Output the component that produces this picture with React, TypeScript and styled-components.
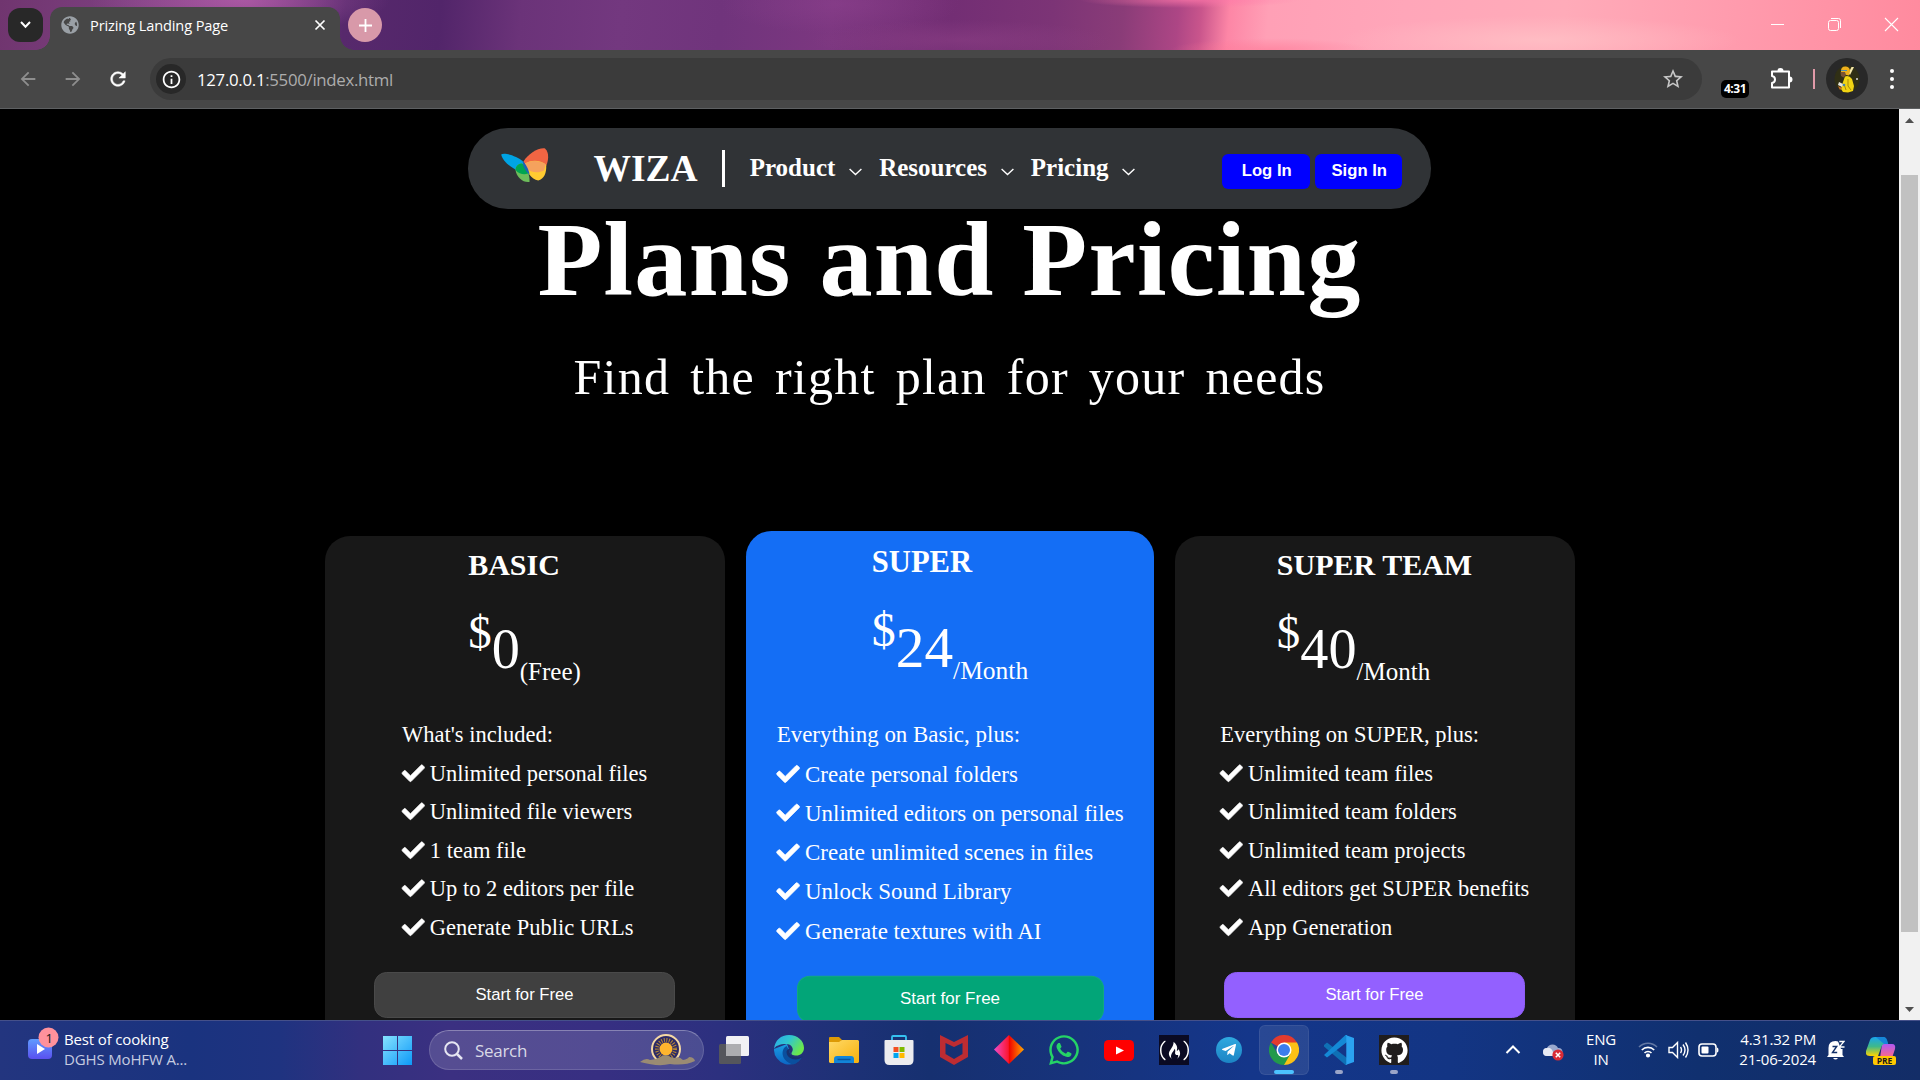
import React from "react";
import styled, { createGlobalStyle } from "styled-components";
import { FaCheck, FaWhatsapp, FaGlobeAmericas, FaTelegramPlane, FaGithub } from "react-icons/fa";
import { MdArrowBack, MdArrowForward, MdRefresh, MdInfoOutline, MdStarBorder } from "react-icons/md";
import { SiFreecodecamp } from "react-icons/si";

const Global = createGlobalStyle`
  *, *::before, *::after { box-sizing: border-box; }
  html, body { margin: 0; background: #000; overflow: hidden; }
  svg { display: block; flex: none; }
`;

const ui = `"Open Sans", "Noto Sans", sans-serif`;
const serif = `"Liberation Serif", "Times New Roman", serif`;
const sans = `"Liberation Sans", Arial, sans-serif`;

const Screen = styled.div`
  width: 1920px;
  height: 1080px;
  display: flex;
  flex-direction: column;
  overflow: hidden;
  background: #000;
  color: #fff;
`;

/* ---------- browser frame ---------- */
const TitleBar = styled.header`
  height: 50px;
  display: flex;
  align-items: flex-start;
  padding-left: 8px;
  background:
    radial-gradient(ellipse 150px 34px at 240px 0, rgba(190, 100, 180, 0.6), transparent),
    radial-gradient(ellipse 120px 30px at 840px 4px, rgba(150, 70, 150, 0.35), transparent),
    radial-gradient(ellipse 150px 20px at 960px 40px, rgba(150, 70, 140, 0.4), transparent),
    radial-gradient(ellipse 110px 8px at 1190px 0, rgba(255, 120, 170, 0.7), transparent),
    radial-gradient(ellipse 200px 24px at 1540px 40px, rgba(255, 200, 202, 0.6), transparent),
    radial-gradient(ellipse 100px 12px at 1270px 50px, rgba(255, 120, 150, 0.6), transparent),
    linear-gradient(95deg, #70356f 0, #7d4080 130px, #8a4589 250px, #57296c 345px, #52256a 440px, #6b3379 520px,
      #73387f 620px, #70347c 720px, #7c3780 830px, #732e74 950px, #7c3476 1050px, #8a3c78 1120px, #ad4685 1175px,
      #c9558c 1198px, #fd86a6 1226px, #ffa0b6 1265px, #ffa6b9 1400px, #ffabb9 1560px, #ff9cae 1720px, #ff8a9e 1920px);
`;
const TabSearch = styled.div`
  width: 35px;
  height: 34px;
  margin-top: 8px;
  border-radius: 12px;
  background: #282828;
  display: grid;
  place-items: center;
`;
const Tab = styled.div`
  position: relative;
  width: 290px;
  height: 43px;
  margin: 7px 0 0 7px;
  padding: 0 13px 7px 11px;
  border-radius: 12px 12px 0 0;
  background: #474747;
  display: flex;
  align-items: center;
  font: 14.6px ${ui};
  letter-spacing: -0.12px;
  &::before, &::after {
    content: "";
    position: absolute;
    bottom: 0;
    width: 14px;
    height: 14px;
  }
  &::before { left: -14px; background: radial-gradient(circle at 0 0, transparent 13.5px, #474747 14px); }
  &::after { right: -14px; background: radial-gradient(circle at 100% 0, transparent 13.5px, #474747 14px); }
`;
const TabTitle = styled.span`
  flex: 1;
  margin-left: 11px;
  white-space: nowrap;
`;
const NewTab = styled.div`
  width: 34px;
  height: 34px;
  margin: 8px 0 0 8px;
  border-radius: 50%;
  background: #d899a9;
  display: grid;
  place-items: center;
`;
const WindowControls = styled.div`
  margin: 17px 21px 0 auto;
  display: flex;
  gap: 42px;
`;

const Toolbar = styled.div`
  height: 59px;
  display: flex;
  align-items: center;
  background: #474747;
  border-bottom: 1px solid #5e6062;
  padding-left: 17px;
`;
const NavIcon = styled.span<{ $dim?: boolean; $gap?: number }>`
  color: ${(p) => (p.$dim ? "#8e8e8e" : "#fff")};
  margin: -1px ${(p) => p.$gap ?? 23}px 0 0;
  font-size: 22px;
  path:not([fill="none"]) { stroke: currentColor; stroke-width: ${(p) => (p.$dim ? 0 : 0.5)}; }
`;
const AddressBar = styled.div`
  width: 1552px;
  height: 42px;
  border-radius: 21px;
  background: #3b3b3b;
  display: flex;
  align-items: center;
  padding: 0 17px 0 6px;
  font: 16.8px ${ui};
  letter-spacing: -0.29px;
  color: #adadad;
  b { font-weight: 400; color: #fff; }
`;
const SiteInfo = styled.span`
  width: 30px;
  height: 30px;
  margin-right: 11px;
  border-radius: 50%;
  background: #282828;
  display: grid;
  place-items: center;
  color: #fff;
`;
const Star = styled.span`
  margin-left: auto;
  color: #c7c7c7;
`;
const TimerBadge = styled.span`
  width: 28px;
  height: 18px;
  margin: 19px 0 0 19px;
  border-radius: 5px;
  background: #000;
  font: 700 12px/18px ${ui};
  letter-spacing: -0.5px;
  text-align: center;
`;
const Extension = styled.span`
  margin: -2px 0 0 21px;
`;
const Separator = styled.span`
  width: 2px;
  height: 20px;
  margin-left: 20px;
  background: #e19aa9;
`;
const Avatar = styled.span`
  width: 42px;
  height: 42px;
  margin-left: 11px;
  border-radius: 50%;
  background: #282828;
  display: grid;
  place-items: center;
`;
const Kebab = styled.span`
  margin-left: 22px;
  display: grid;
  gap: 4px;
  i { width: 4px; height: 4px; border-radius: 50%; background: #fff; }
`;

/* ---------- web page ---------- */
const Viewport = styled.div`
  height: 911px;
  display: flex;
`;
const Page = styled.main`
  width: 1899px;
  height: 911px;
  overflow: hidden;
  padding-top: 19px;
  display: flex;
  flex-direction: column;
  align-items: center;
  font-family: ${serif};
`;
const NavBar = styled.nav`
  flex: none;
  width: 963px;
  height: 81px;
  border-radius: 40px;
  background: #303336;
  display: flex;
  align-items: center;
  padding: 0 29px 0 33px;
`;
const LogoBox = styled.span`
  margin: -7px 44.5px 0 0;
`;
const Brand = styled.span`
  font-size: 37.5px;
  line-height: 42px;
  font-weight: 700;
`;
const Divider = styled.span`
  width: 3px;
  height: 37px;
  margin: 0 25px 0 24px;
  background: #fff;
`;
const MenuItem = styled.span`
  display: flex;
  align-items: center;
  gap: 13.5px;
  margin-right: 17.3px;
  font-size: 25px;
  line-height: 28px;
  font-weight: 700;
  span { margin-top: -1px; }
  svg { margin-top: 7px; }
`;
const AuthButtons = styled.div`
  margin: 6px 0 0 auto;
  display: flex;
  gap: 5px;
`;
const AuthButton = styled.button<{ $width: number }>`
  width: ${(p) => p.$width}px;
  height: 35px;
  padding: 0 0 2px 1.5px;
  border: 0;
  border-radius: 6.25px;
  background: #0000ff;
  color: #fff;
  font: 700 16.67px ${sans};
`;
const Heading = styled.h1`
  margin: 0;
  font-size: 106.25px;
  line-height: 100px;
  letter-spacing: 1.25px;
`;
const SubHeading = styled.p`
  margin: 39px 0 0;
  font-size: 50px;
  line-height: 58px;
  letter-spacing: 1.25px;
  word-spacing: 6.25px;
`;
const Cards = styled.section`
  display: flex;
  gap: 25px;
  margin-top: 130px;
`;
const Card = styled.article<{ $featured?: boolean }>`
  width: 400px;
  height: 508px;
  padding-top: ${(p) => (p.$featured ? 13 : 12)}px;
  border-radius: 25px;
  background: ${(p) => (p.$featured ? "#146ef5" : "#181818")};
  transform: ${(p) => (p.$featured ? "scale(1.02)" : "none")};
  display: flex;
  flex-direction: column;
  align-items: center;
`;
const CardHead = styled.div`
  display: flex;
  flex-direction: column;
`;
const PlanName = styled.h2`
  margin: 0;
  font-size: 30px;
  line-height: 34px;
`;
const Price = styled.div`
  margin-top: 35px;
  font-size: 56.25px;
  line-height: 64px;
  height: 64px;
  white-space: nowrap;
  sup { font-size: 46.9px; line-height: 0; }
  sub { font-size: 25px; line-height: 0; }
`;
const Features = styled.ul<{ $featured?: boolean }>`
  list-style: none;
  margin: 35px 0 ${(p) => (p.$featured ? 23.4 : 24.4)}px;
  padding: 0 0 0 0.4px;
  font-size: 22.5px;
`;
const Feature = styled.li`
  height: 38.6px;
  line-height: 38.6px;
  display: flex;
  align-items: center;
  gap: 5.3px;
  white-space: nowrap;
  svg { margin-top: -2px; stroke: #fff; stroke-width: 16; overflow: visible; }
`;
const StartButton = styled.button<{ $bg: string; $edge: string }>`
  width: 301px;
  height: 46px;
  border: 1px solid ${(p) => p.$edge};
  border-radius: 12.5px;
  background: ${(p) => p.$bg};
  color: #fff;
  font: 16.67px ${sans};
  padding: 0;
`;
const ScrollTrack = styled.div`
  width: 21px;
  background: #f1f1f1;
  display: flex;
  flex-direction: column;
  align-items: center;
  padding: 9px 0 8px;
`;
const ScrollThumb = styled.div`
  width: 17px;
  height: 757px;
  margin: 52px 0 auto;
  background: #c1c1c1;
`;

/* ---------- taskbar ---------- */
const Taskbar = styled.footer`
  height: 60px;
  border-top: 1px solid #45508a;
  display: flex;
  align-items: center;
  padding: 0 0 1px 27px;
  background: linear-gradient(90deg, #23357f 0, #1a337f 190px, #1f3380 280px, #32307f 360px, #3b3081 450px, #372f82 600px,
    #2c307f 720px, #1d3176 850px, #163070 930px, #17337c 1080px, #14368a 1250px, #133584 1450px, #10306f 1700px, #132d67 1920px);
  font-family: ${ui};
`;
const WidgetIcon = styled.span`
  margin-top: -12px;
`;
const TwoLines = styled.div<{ $align?: string; $width?: number; $left?: number }>`
  width: ${(p) => (p.$width ? p.$width + "px" : "auto")};
  margin: -2px 0 0 ${(p) => p.$left ?? 0}px;
  text-align: ${(p) => p.$align ?? "left"};
  font-size: 15px;
  line-height: 20px;
  letter-spacing: -0.15px;
  white-space: nowrap;
  small { display: block; font-size: inherit; color: #c5cbe0; }
`;
const StartIcon = styled.span`
  margin-left: 191px;
`;
const SearchBox = styled.div`
  width: 275px;
  height: 40px;
  margin-left: 17px;
  padding: 0 8px 0 14px;
  border-radius: 20px;
  border: 1px solid rgba(255, 255, 255, 0.14);
  border-top-color: rgba(255, 255, 255, 0.3);
  background: rgba(255, 255, 255, 0.14);
  display: flex;
  align-items: center;
  font-size: 17px;
  letter-spacing: -0.3px;
  color: #d9d9e6;
  span { flex: 1; margin: 0 0 0 12px; }
`;
const AppTile = styled.span<{ $active?: boolean }>`
  position: relative;
  width: 50px;
  height: 50px;
  margin-left: 5px;
  border-radius: 6px;
  background: ${(p) => (p.$active ? "rgba(255,255,255,.09)" : "transparent")};
  box-shadow: ${(p) => (p.$active ? "inset 0 0 0 1px rgba(255,255,255,.07)" : "none")};
  display: grid;
  place-items: center;
`;
const Running = styled.i<{ $active?: boolean }>`
  position: absolute;
  bottom: 1px;
  left: 50%;
  transform: translateX(-50%);
  width: ${(p) => (p.$active ? 20 : 8)}px;
  height: 4px;
  border-radius: 2px;
  background: ${(p) => (p.$active ? "#4cc2ff" : "#9aa5c8")};
`;
const Apps = styled.div`
  display: flex;
`;
const TileBox = styled.span<{ $bg: string; $size: number; $round?: boolean }>`
  width: ${(p) => p.$size}px;
  height: ${(p) => p.$size}px;
  border-radius: ${(p) => (p.$round ? "50%" : "0")};
  background: ${(p) => p.$bg};
  display: grid;
  place-items: center;
  color: #fff;
`;
const Tray = styled.div`
  margin-left: auto;
  padding-right: 23px;
  display: flex;
  align-items: center;
`;
const TrayItem = styled.span<{ $left: number; $top?: number }>`
  margin: ${(p) => p.$top ?? 0}px 0 0 ${(p) => p.$left}px;
`;

const Chevron = () => (
  <svg width="13" height="8" viewBox="0 0 13 8" fill="none" stroke="#fff" strokeWidth="1.400"><path d="M.6 1 6.500 6.600 12.400 1" /></svg>
);

const Butterfly = () => (
  <svg width="48" height="35" viewBox="0 0 48 35">
    <path d="M.2 6.500C3 4 16 8 22 13.500c3 3.500 5.500 8.500 6.500 13C18 25 2 16 .2 6.500Z" fill="#00a4e4" />
    <path d="M14.500 22c0-4 3-6.500 6.500-6.500 4 3 8 10 7.500 18.500C22 35 15.500 29 14.500 22Z" fill="#6dbd5b" />
    <path d="M14.500 22c0-4 3-6.500 6.500-6.500 3 2 5 6 6 10-3 1.500-9 1-12.500-3.500Z" fill="#00a651" />
    <path d="M22.500 13.500C27 6 37-.5 44 .4c5 5 3.500 14-.5 20.600-9 3-18 .5-21-7.500Z" fill="#f16543" />
    <path d="M24 15.500c5-3.500 15-4.500 21.200 1.500.5 8-2 14-8 15.600-7-1.600-11.700-8.600-13.200-17.100Z" fill="#ffcb31" />
    <path d="M24 15.500c5-3.500 14-3.500 20.700.500-.5 2.500-1 4-1.700 6.500-6 3-13.500 2-17.500-2Z" fill="#f5a25d" />
    <path d="M22 13c2.500 3 6 8.500 6.500 13.500-3.500-2.500-7.500-9-6.500-13.500Z" fill="#1c63b7" />
  </svg>
);

const EdgeIcon = () => (
  <svg width="30" height="30" viewBox="0 0 30 30">
    <defs>
      <linearGradient id="eg1" x1="0" y1="0" x2="1" y2=".5"><stop offset="0" stopColor="#2aa7ea" /><stop offset=".5" stopColor="#30c6d0" /><stop offset="1" stopColor="#6be84c" /></linearGradient>
      <linearGradient id="eg2" x1="0" y1="0" x2="0" y2="1"><stop offset="0" stopColor="#1a9ee4" /><stop offset="1" stopColor="#0c66c4" /></linearGradient>
    </defs>
    <path d="M0 14a15 15 0 0 0 28 8c-4 3-12 3-12-5l-3-8Z" fill="url(#eg2)" />
    <path d="M12.500 11c-6 3-6 15 6.500 18.500 4-1 7-4 9-7.500-6 3-14 2-12.500-6Z" fill="#0a4f9e" />
    <path d="M16 14c-1.500 5 2 8.500 7 8.500 2.500 0 4-.5 5.500-2l-.5 2c-6 4-15 1.500-15.500-5.500 0-2 1.500-3.500 3.500-3Z" fill="#17316f" />
    <path d="M0 14C1 5 7 0 15 0c9 0 15 6 15 13 0 5-4 7.500-7.500 7.500-4 0-6-1-4.500-3.500 2-3 0-8-6-8C6 9 1 11 0 14Z" fill="url(#eg1)" />
  </svg>
);

const apps: { name: string; icon: React.ReactNode; active?: boolean; running?: boolean }[] = [
  {
    name: "taskview",
    icon: (
      <svg width="30" height="28" viewBox="0 0 30 28"><rect x="7" y="0" width="23" height="20" rx="1.500" fill="#f1f1f4" /><rect x="0" y="8" width="22" height="20" rx="1.500" fill="#55565c" /><rect x="7" y="8" width="15" height="12" fill="#adadb0" /></svg>
    ),
  },
  { name: "edge", icon: <EdgeIcon /> },
  {
    name: "explorer",
    icon: (
      <svg width="30" height="28" viewBox="0 0 30 28">
        <defs><linearGradient id="fo" x1="0" y1="0" x2="1" y2="1"><stop offset="0" stopColor="#ffd967" /><stop offset="1" stopColor="#f7b10c" /></linearGradient></defs>
        <path d="M0 2Q0 1 1 1h9l3 3-2 5H0Z" fill="#dd9a05" /><path d="M0 6h10l3-2h16l1 1v21l-1 1H1l-1-1Z" fill="url(#fo)" />
        <path d="M5 27v-4q0-3 3-3h14q3 0 3 3v4Z" fill="#1285d8" /><path d="M8.500 23.500h13" stroke="#0a559e" strokeWidth="1.500" />
      </svg>
    ),
  },
  {
    name: "store",
    icon: (
      <svg width="30" height="30" viewBox="0 0 30 30">
        <path d="M8 6V2q0-1 1-1h12q1 0 1 1v4" fill="none" stroke="#35c1f1" strokeWidth="1.800" /><path d="M.5 6q0-1 1-1h27q1 0 1 1v19q0 5-5 5h-19q-5 0-5-5Z" fill="#ececef" />
        <rect x="9.500" y="12" width="5" height="5" fill="#f25022" /><rect x="15.500" y="12" width="5" height="5" fill="#7fba00" /><rect x="9.500" y="18" width="5" height="5" fill="#00a4ef" /><rect x="15.500" y="18" width="5" height="5" fill="#ffb900" />
      </svg>
    ),
  },
  { name: "mcafee", icon: <svg width="28" height="30" viewBox="0 0 28 30"><path fillRule="evenodd" d="M0 0 14 7 28 0v22l-14 8L0 22Zm5.500 8v11l8.500 5 8.500-5V8L14 12Z" fill="#bd2c32" /></svg> },
  {
    name: "diamond",
    icon: (
      <svg width="30" height="30" viewBox="0 0 30 30">
        <defs><linearGradient id="di"><stop offset="0" stopColor="#ef4bcb" /><stop offset=".48" stopColor="#fb1730" /><stop offset=".5" stopColor="#f00000" /><stop offset="1" stopColor="#ffa500" /></linearGradient></defs>
        <path d="M15 0 30 14.500 15 29 0 14.500Z" fill="url(#di)" />
      </svg>
    ),
  },
  { name: "whatsapp", icon: <FaWhatsapp size={34} color="#25d366" /> },
  { name: "youtube", icon: <svg width="30" height="21" viewBox="0 0 30 21"><rect width="30" height="21" rx="4.500" fill="#ff0000" /><path d="m12 6.500 8 4-8 4Z" fill="#fff" /></svg> },
  { name: "fcc", icon: <TileBox $bg="#0a0a23" $size={30}><SiFreecodecamp size={29} /></TileBox> },
  { name: "telegram", icon: <TileBox $bg="linear-gradient(#2fa9e0,#1c84c4)" $size={26} $round><FaTelegramPlane size={16} /></TileBox> },
  {
    name: "chrome",
    active: true,
    running: true,
    icon: (
      <svg width="30" height="30" viewBox="0 0 30 30">
        <path d="M15 15 2 7.500A15 15 0 0 1 28 7.500Z" fill="#e33b2e" /><path d="M15 15V7.500h13A15 15 0 0 1 15 30Z" fill="#fbc116" /><path d="M15 15 21.500 18.700 15 30A15 15 0 0 1 2 7.500L8.500 18.700Z" fill="#229a4b" />
        <circle cx="15" cy="15" r="7.500" fill="#fff" /><circle cx="15" cy="15" r="6" fill="#3b7ded" />
      </svg>
    ),
  },
  {
    name: "vscode",
    running: true,
    icon: (
      <svg width="30" height="30" viewBox="0 0 30 30"><path d="m0 10 3-2.500L23 23v7h-1.500L0 11.500Z" fill="#0f70b5" /><path d="M0 20 21.500 0H23v7L3 22.500Z" fill="#1489d6" /><path d="M21.500 0 30 3v24l-8.500 3 .8-1V1Z" fill="#2ba3f1" /></svg>
    ),
  },
  { name: "github", running: true, icon: <TileBox $bg="#201d1d" $size={30}><FaGithub size={27} /></TileBox> },
];

const plans = [
  {
    name: "BASIC", price: "0", unit: "(Free)", intro: "What's included:", bg: "#404040", edge: "#4a4a4a",
    items: ["Unlimited personal files", "Unlimited file viewers", "1 team file", "Up to 2 editors per file", "Generate Public URLs"],
  },
  {
    name: "SUPER", price: "24", unit: "/Month", intro: "Everything on Basic, plus:", bg: "#02a578", edge: "#12a97f", featured: true,
    items: ["Create personal folders", "Unlimited editors on personal files", "Create unlimited scenes in files", "Unlock Sound Library", "Generate textures with AI"],
  },
  {
    name: "SUPER TEAM", price: "40", unit: "/Month", intro: "Everything on SUPER, plus:", bg: "#9360ff", edge: "#8e5cf6",
    items: ["Unlimited team files", "Unlimited team folders", "Unlimited team projects", "All editors get SUPER benefits", "App Generation"],
  },
];

const BrowserFrame = () => (
  <>
    <TitleBar>
      <TabSearch><svg width="11" height="8" viewBox="0 0 11 8" fill="none" stroke="#fff" strokeWidth="2"><path d="m1 1 4.500 4.700L10 1" /></svg></TabSearch>
      <Tab>
        <FaGlobeAmericas size={18} color="#9aa0a6" />
        <TabTitle>Prizing Landing Page</TabTitle>
        <svg width="14" height="14" viewBox="0 0 14 14" stroke="#fff" strokeWidth="1.700"><path d="m2.500 2.500 9 9m0-9-9 9" /></svg>
      </Tab>
      <NewTab><svg width="13" height="13" viewBox="0 0 13 13" stroke="#fff" strokeWidth="1.800"><path d="M6.500 0v13M0 6.500h13" /></svg></NewTab>
      <WindowControls>
        <svg width="15" height="15" viewBox="0 0 15 15" stroke="#fff"><path d="M1 7.500h13" /></svg>
        <svg width="15" height="15" viewBox="0 0 15 15" fill="none" stroke="#fff"><rect x="1.500" y="3.500" width="10" height="10" rx="2" /><path d="M4 1.500h7.500a2 2 0 0 1 2 2V11" /></svg>
        <svg width="15" height="15" viewBox="0 0 15 15" stroke="#fff" strokeWidth="1.100"><path d="m1 1 13 13m0-13L1 14" /></svg>
      </WindowControls>
    </TitleBar>
    <Toolbar>
      <NavIcon $dim><MdArrowBack /></NavIcon>
      <NavIcon $dim><MdArrowForward /></NavIcon>
      <NavIcon $gap={21}><MdRefresh /></NavIcon>
      <AddressBar>
        <SiteInfo><MdInfoOutline size={21} /></SiteInfo>
        <b>127.0.0.1</b>:5500/index.html
        <Star><MdStarBorder size={24} /></Star>
      </AddressBar>
      <TimerBadge>4:31</TimerBadge>
      <Extension>
        <svg width="23" height="23" viewBox="0 0 23 23">
          <path d="M2 4.500h17v16H2v-4.500q3-.5 3-3.500T2 9Z" fill="none" stroke="#fff" strokeWidth="2" strokeLinejoin="round" />
          <path d="M7.500 4a3 3 0 0 1 6 0ZM19.500 9.500a3 3 0 0 1 0 6Z" fill="#fff" />
        </svg>
      </Extension>
      <Separator />
      <Avatar>
        <svg width="26" height="28" viewBox="0 0 26 28">
          <ellipse cx="13" cy="14" rx="12.500" ry="13.500" fill="#302f15" />
          <path d="m16 10 4-8h-2.500l-3 6Z" fill="#f5e7a8" />
          <path d="M7 6q0-5 5-4.500 4 .5 4 5l-1 4-5-1-3-2Z" fill="#eeb01c" /><path d="M6.500 7h4.500l1 3-2.500 2.500L7 11Z" fill="#7a5233" /><path d="M7 5.500h6" stroke="#4a8fb0" />
          <path d="M11 11.500q4-1.500 7 2.500l2 7-1 5-5 1.500-5-.5-2-3 2-7Z" fill="#f1d413" />
          <path d="M14 14v7l3 4M10 19l2 6" stroke="#a58b0c" fill="none" /><path d="m5 17 4 2-1 3-4-2Z" fill="#e9e9dd" /><path d="m4 21 4 2-2 2Z" fill="#cf7024" /><circle cx="10" cy="20" r="1.300" fill="#4385af" /><circle cx="23" cy="14" r="1" fill="#ddd" />
        </svg>
      </Avatar>
      <Kebab><i /><i /><i /></Kebab>
    </Toolbar>
  </>
);

const PricingPage = () => (
  <Page>
    <NavBar>
      <LogoBox><Butterfly /></LogoBox>
      <Brand>WIZA</Brand>
      <Divider />
      {["Product", "Resources", "Pricing"].map((m) => (
        <MenuItem key={m}><span>{m}</span><Chevron /></MenuItem>
      ))}
      <AuthButtons>
        <AuthButton $width={88}>Log In</AuthButton>
        <AuthButton $width={87}>Sign In</AuthButton>
      </AuthButtons>
    </NavBar>
    <Heading>Plans and Pricing</Heading>
    <SubHeading>Find the right plan for your needs</SubHeading>
    <Cards>
      {plans.map((p) => (
        <Card key={p.name} $featured={p.featured}>
          <CardHead>
            <PlanName>{p.name}</PlanName>
            <Price><sup>$</sup>{p.price}<sub>{p.unit}</sub></Price>
          </CardHead>
          <Features $featured={p.featured}>
            <Feature>{p.intro}</Feature>
            {p.items.map((t) => (
              <Feature key={t}><FaCheck size={22.5} /><span>{t}</span></Feature>
            ))}
          </Features>
          <StartButton $bg={p.bg} $edge={p.edge}>Start for Free</StartButton>
        </Card>
      ))}
    </Cards>
  </Page>
);

const SystemTaskbar = () => (
  <Taskbar>
    <WidgetIcon>
      <svg width="32" height="34" viewBox="0 0 32 34">
        <defs><linearGradient id="wi" x1="0" y1="0" x2="0" y2="1"><stop offset="0" stopColor="#5f9cff" /><stop offset="1" stopColor="#5a50f0" /></linearGradient></defs>
        <rect x="1" y="12" width="24" height="20" rx="4" fill="url(#wi)" /><path d="m10 17 8 5-8 5Z" fill="#fff" />
        <circle cx="21.500" cy="10.500" r="10" fill="#ff919c" />
        <text x="18.500" y="15.500" fontSize="13" fill="#1a1a1a" fontFamily="Open Sans">1</text>
      </svg>
    </WidgetIcon>
    <TwoLines $width={128} $left={5}>Best of cooking<small>DGHS MoHFW A...</small></TwoLines>
    <StartIcon>
      <svg width="29" height="29" viewBox="0 0 29 29">
        <defs><linearGradient id="wn" x1="0" y1="0" x2="29" y2="29" gradientUnits="userSpaceOnUse"><stop offset="0" stopColor="#86e2ff" /><stop offset="1" stopColor="#0d99f8" /></linearGradient></defs>
        <path d="M0 0h14v14H0Zm15 0h14v14H15ZM0 15h14v14H0Zm15 0h14v14H15Z" fill="url(#wn)" />
      </svg>
    </StartIcon>
    <SearchBox>
      <svg width="19" height="19" viewBox="0 0 19 19" fill="none" stroke="#e6e6f2" strokeWidth="2"><circle cx="8" cy="8" r="6.800" /><path d="m13 13 5 5" strokeWidth="2.500" /></svg>
      <span>Search</span>
      <svg width="56" height="34" viewBox="0 0 56 34">
        <circle cx="27" cy="16" r="14" fill="#2c2a66" stroke="#f5d9a4" strokeWidth="2" />
        <circle cx="27" cy="16" r="9" fill="none" stroke="#b98a35" strokeWidth="4" strokeDasharray="1 1.500" />
        <circle cx="27" cy="16" r="6.500" fill="#ffb52e" />
        <path d="M1 29q6-5 10-2 7-1 10-3 6-4 10 0l5 1q4-2 8 2 5-1 6-3 5 0 6 4-10 5-25 3-12 3-30-2Z" fill="#9a8b73" />
      </svg>
    </SearchBox>
    <Apps>
      {apps.map((a) => (
        <AppTile key={a.name} $active={a.active}>{a.icon}{a.running && <Running $active={a.active} />}</AppTile>
      ))}
    </Apps>
    <Tray>
      <svg width="16" height="10" viewBox="0 0 16 10" fill="none" stroke="#fff" strokeWidth="2"><path d="m1.500 8 6.500-6.500L14.500 8" /></svg>
      <TrayItem $left={22} $top={3}>
        <svg width="21" height="18" viewBox="0 0 21 18"><path d="M4 13a4 4 0 0 1 0-8 6 6 0 0 1 11 0 4 4 0 0 1 1 8Z" fill="#9aa8cd" /><path d="M4 13a4 4 0 0 1 0-8q4-1 6 4l4 4Z" fill="#e7eaf4" /><circle cx="15" cy="12" r="5.600" fill="#d92b36" /><path d="m12.800 9.800 4.400 4.400m0-4.400-4.400 4.400" stroke="#fff" strokeWidth="1.500" /></svg>
      </TrayItem>
      <TwoLines $align="center" $width={32} $left={21}>ENG<br />IN</TwoLines>
      <TrayItem $left={21}>
        <svg width="20" height="16" viewBox="0 0 20 16" fill="none" stroke="#fff" strokeWidth="1.600"><path d="M1 5a12.700 12.700 0 0 1 18 0" opacity=".35" /><path d="M3.800 8a8.700 8.700 0 0 1 12.400 0M6.500 11a5 5 0 0 1 7 0" /><circle cx="10" cy="13.500" r="1.300" fill="#fff" /></svg>
      </TrayItem>
      <TrayItem $left={10}>
        <svg width="21" height="18" viewBox="0 0 21 18" fill="none" stroke="#fff" strokeWidth="1.400"><path d="M1 6.500h3.500l5-5v15l-5-5H1Z" /><path d="M12.500 6q2 3 0 6M15 3.500q4 5.500 0 11M17.500 1.500q5 7.500 0 15" /></svg>
      </TrayItem>
      <TrayItem $left={9}>
        <svg width="21" height="14" viewBox="0 0 21 14"><rect x="1" y="1" width="17" height="12" rx="3" fill="none" stroke="#fff" strokeWidth="1.600" /><rect x="3.500" y="3.500" width="7" height="7" rx="1" fill="#fff" /><path d="M19 4.500q1.500 0 1.500 2.500T19 9.500Z" fill="#fff" /></svg>
      </TrayItem>
      <TwoLines $align="right" $width={84} $left={13}>4.31.32 PM<br />21-06-2024</TwoLines>
      <TrayItem $left={11}>
        <svg width="18" height="20" viewBox="0 0 18 20"><path d="M1.500 15V8q0-7 7-7 6 0 7 7v7l1.500 2H0Z" fill="#fff" /><path d="M6 18h5q-2.500 3-5 0Z" fill="#fff" /><path d="M5.500 6.500h4.200l-4.200 6h4.700" fill="none" stroke="#123069" strokeWidth="1.400" /><path d="M10.500 0H18v9h-4Z" fill="#123069" /><path d="M12.300 1.500H17l-4.700 5.500H17.500" fill="none" stroke="#fff" strokeWidth="1.300" /></svg>
      </TrayItem>
      <TrayItem $left={21} $top={2}>
        <svg width="31" height="30" viewBox="0 0 31 30">
          <defs>
            <linearGradient id="c1" x1="0" y1="0" x2="0" y2="1"><stop offset="0" stopColor="#19a5ed" /><stop offset=".5" stopColor="#3fb98a" /><stop offset="1" stopColor="#ffd400" /></linearGradient>
            <linearGradient id="c2" x1="0" y1="0" x2="0" y2="1"><stop offset="0" stopColor="#b158f2" /><stop offset="1" stopColor="#ff6b83" /></linearGradient>
          </defs>
          <path d="M16 8h10q4 0 3 5l-3 9H14Z" fill="url(#c2)" /><path d="M17 1q3 0 5 7h-3q-3 0-4 4l-3 8H4q-5 0-4-5L4 4q1-3 5-3Z" fill="url(#c1)" /><path d="M10 1h8q3 0 4 7h-4Z" fill="#1686d9" />
          <rect x="7" y="20" width="23" height="9" rx="2" fill="#ffc800" />
          <text x="18.500" y="27.800" fontSize="8.500" fontWeight="700" textAnchor="middle" fill="#1a1a1a" fontFamily="Open Sans">PRE</text>
        </svg>
      </TrayItem>
    </Tray>
  </Taskbar>
);

export default function App() {
  return (
    <Screen>
      <Global />
      <BrowserFrame />
      <Viewport>
        <PricingPage />
        <ScrollTrack>
          <svg width="9" height="5" viewBox="0 0 9 5"><path d="M4.500 0 9 5H0Z" fill="#505050" /></svg>
          <ScrollThumb />
          <svg width="9" height="5" viewBox="0 0 9 5"><path d="M0 0h9L4.500 5Z" fill="#505050" /></svg>
        </ScrollTrack>
      </Viewport>
      <SystemTaskbar />
    </Screen>
  );
}
